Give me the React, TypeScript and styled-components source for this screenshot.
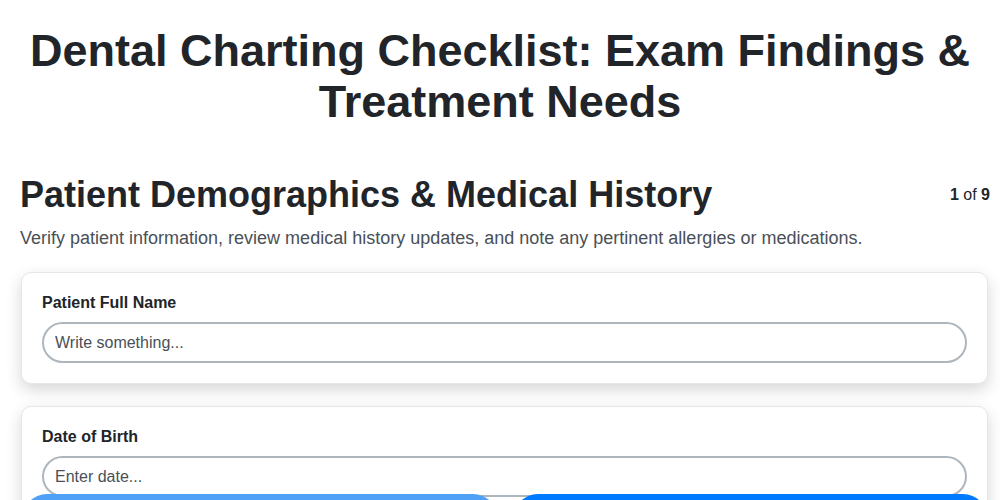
import styled, { createGlobalStyle } from 'styled-components';

const GlobalStyle = createGlobalStyle`
  * {
    box-sizing: border-box;
  }

  body {
    margin: 0;
    background: #fff;
    font-family: 'Liberation Sans', Arial, sans-serif;
    color: #212529;
  }
`;

const Page = styled.div`
  padding: 0 12px 80px 20px;
`;

const Title = styled.h1`
  margin: 25px 0 0 -8px;
  text-align: center;
  font-size: 45px;
  line-height: 51px;
  font-weight: 700;
  color: #212529;
`;

const SectionHeader = styled.div`
  display: flex;
  justify-content: space-between;
  align-items: center;
  margin-top: 46px;
`;

const SectionTitle = styled.h2`
  margin: 0;
  font-size: 36px;
  line-height: 44px;
  font-weight: 700;
  color: #212529;
`;

const Counter = styled.div`
  font-size: 16px;
  line-height: 20px;
  color: #212529;
  margin-right: -2px;

  b {
    font-weight: 700;
  }
`;

const Description = styled.p`
  margin: 10px 0 23px;
  font-size: 18px;
  line-height: 22px;
  color: #495057;
`;

const Card = styled.div`
  margin: 0 0 22px 1px;
  padding: 20px 20px 20px;
  background: #fff;
  border: 1px solid #e6e7ec;
  border-radius: 10px;
  box-shadow: 0 6px 16px rgba(0, 0, 0, 0.16);
`;

const Label = styled.label`
  display: block;
  font-size: 16px;
  line-height: 20px;
  font-weight: 700;
  color: #212529;
  margin-bottom: 9px;
`;

const Input = styled.input`
  display: block;
  width: 100%;
  height: 41px;
  padding: 0 11px;
  border: 2px solid #adb5bd;
  border-radius: 21px;
  font-family: 'Liberation Sans', Arial, sans-serif;
  font-size: 16px;
  color: #212529;
  background: #fff;
  outline: none;

  &::placeholder {
    color: #495057;
  }
`;

const Nav = styled.div`
  position: fixed;
  left: 22px;
  right: 12px;
  bottom: -44px;
  display: flex;
  gap: 15px;
`;

const NavButton = styled.button<{ $primary?: boolean }>`
  flex: 1;
  height: 50px;
  border: none;
  border-radius: 25px;
  background: ${(p) => (p.$primary ? '#007bff' : '#4fa0f7')};
  color: #fff;
  font-family: 'Liberation Sans', Arial, sans-serif;
  font-size: 16px;
  font-weight: 700;
`;

const fields = [
  { label: 'Patient Full Name', placeholder: 'Write something...' },
  { label: 'Date of Birth', placeholder: 'Enter date...' },
];

export default function App() {
  return (
    <>
      <GlobalStyle />
      <Page>
        <Title>Dental Charting Checklist: Exam Findings &amp; Treatment Needs</Title>
        <SectionHeader>
          <SectionTitle>Patient Demographics &amp; Medical History</SectionTitle>
          <Counter>
            <b>1</b> of <b>9</b>
          </Counter>
        </SectionHeader>
        <Description>
          Verify patient information, review medical history updates, and note any pertinent allergies or medications.
        </Description>
        {fields.map((f) => (
          <Card key={f.label}>
            <Label>{f.label}</Label>
            <Input placeholder={f.placeholder} />
          </Card>
        ))}
      </Page>
      <Nav>
        <NavButton disabled>Previous</NavButton>
        <NavButton $primary>Next</NavButton>
      </Nav>
    </>
  );
}
